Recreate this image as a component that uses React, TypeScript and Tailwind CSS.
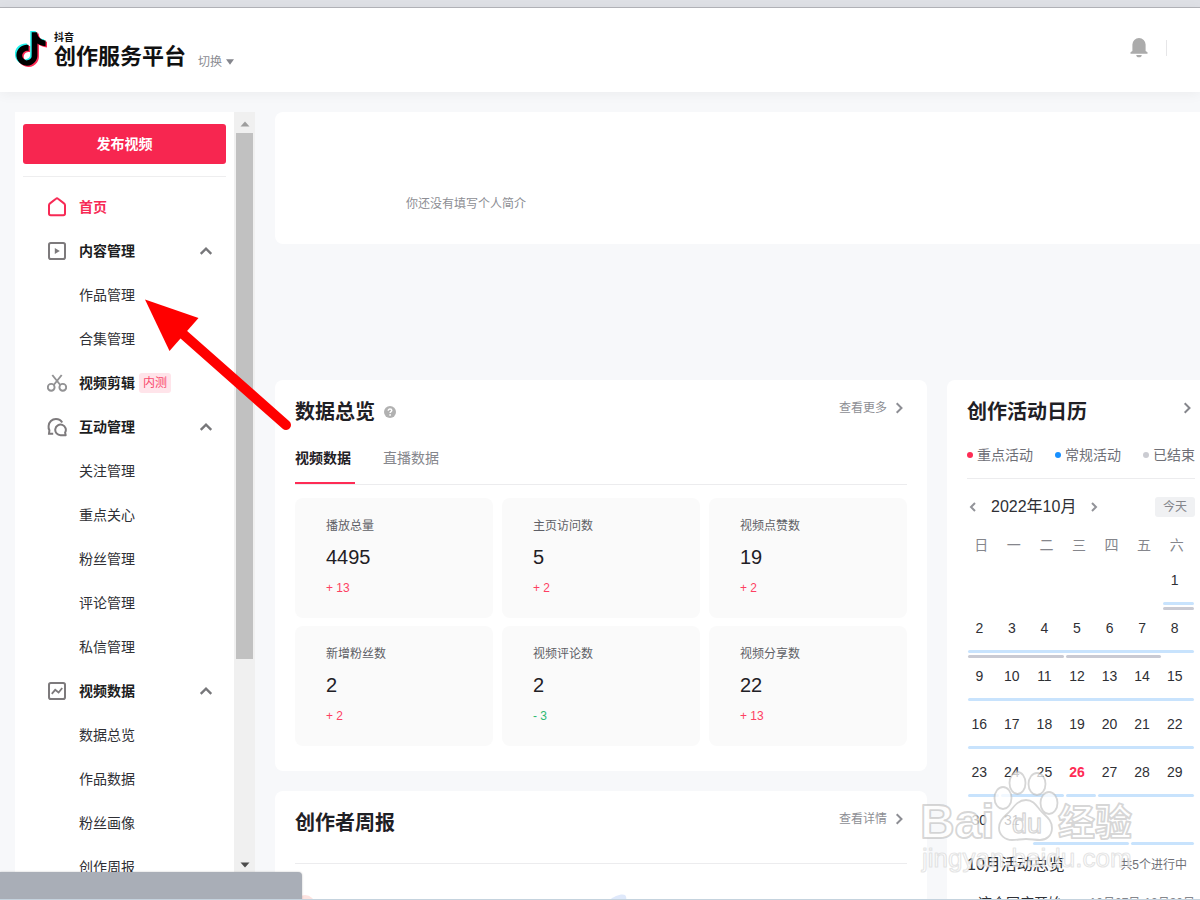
import type { ReactNode } from "react";

type Section = {
  icon: ReactNode;
  label: string;
  badge?: string;
  children?: string[];
};

const HomeIcon = () => (
  <svg className="size-5" viewBox="0 0 20 20" fill="none" stroke="#f72a55" strokeWidth="2" strokeLinejoin="round">
    <path d="M2 8.300c0-.8.3-1.400 1-1.900L9 1.700c.6-.5 1.400-.5 2 0l6 4.700c.7.500 1 1.100 1 1.900v8.200c0 1.100-.6 1.700-1.700 1.700H3.700C2.600 18.200 2 17.600 2 16.500z" />
  </svg>
);

const ContentIcon = () => (
  <svg className="size-5" viewBox="0 0 20 20" fill="none" stroke="#7d7a7c" strokeWidth="2">
    <rect x="2" y="2" width="16" height="16" rx="1.800" />
    <path d="M7.800 7v6l5-3z" fill="#7d7a7c" stroke="none" />
  </svg>
);

const ScissorsIcon = () => (
  <svg className="size-5" viewBox="0 0 20 20" fill="none" stroke="#929294" strokeWidth="1.900">
    <circle cx="4.200" cy="14.300" r="3.400" />
    <circle cx="15.800" cy="14.300" r="3.400" />
    <path d="M5.300 2l8 10M14.700 2L6.700 12" />
  </svg>
);

const ChatIcon = () => (
  <svg className="size-5" viewBox="0 0 20 20" fill="none" stroke="#7d7a7c" strokeWidth="2">
    <path d="M6.200 16.800H2l.4-3.500A7.400 7.400 0 0 1 1.600 9 7.300 7.300 0 0 1 9 2c2.700 0 5 1.300 6.200 3.400" />
    <path d="M18.700 18.200h-5a5.300 5.300 0 1 1 4.400-2.600z" strokeLinejoin="round" />
  </svg>
);

const DataIcon = () => (
  <svg className="size-5" viewBox="0 0 20 20" fill="none" stroke="#7d7a7c" strokeWidth="2">
    <rect x="2" y="2" width="16" height="16" rx="1.800" />
    <path d="M4.800 12.800l3.400-4 3.400 2.700 3.600-4.500" strokeWidth="1.800" />
  </svg>
);

const Chevron = ({ dir, className }: { dir: "up" | "left" | "right"; className: string }) => {
  const d = { up: "M1.500 8.500L6 4l4.500 4.500", left: "M8 2L4 6l4 4", right: "M3.700 1.200L8.500 6 3.700 10.800" }[dir];
  return (
    <svg className={className} viewBox="0 0 12 12" fill="none" stroke="currentColor" strokeWidth="2">
      <path d={d} />
    </svg>
  );
};

const NOTE =
  "M12.525.02c1.31-.02 2.61-.01 3.91-.02.08 1.53.63 3.09 1.75 4.17 1.12 1.11 2.7 1.62 4.24 1.79v4.03c-1.44-.05-2.89-.35-4.2-.97-.57-.26-1.1-.59-1.62-.93-.01 2.92.01 5.84-.02 8.75-.08 1.4-.54 2.79-1.35 3.94-1.31 1.92-3.58 3.17-5.91 3.21-1.43.08-2.86-.31-4.08-1.03-2.02-1.19-3.44-3.37-3.65-5.71-.02-.5-.03-1-.01-1.49.18-1.9 1.12-3.72 2.58-4.96 1.66-1.44 3.98-2.13 6.15-1.72.02 1.48-.04 2.96-.04 4.44-.99-.32-2.15-.23-3.02.37-.63.41-1.11 1.04-1.36 1.75-.21.51-.15 1.07-.14 1.61.24 1.64 1.82 3.02 3.5 2.87 1.12-.01 2.19-.66 2.77-1.61.19-.33.4-.67.41-1.06.1-1.79.06-3.57.07-5.36.01-4.03-.01-8.05.02-12.07z";

const Logo = () => (
  <svg className="mt-px h-9 w-8" viewBox="0 0 32 36" aria-label="抖音">
    <path d={NOTE} fill="#25f4ee" transform="translate(-2.300 0) scale(1.400)" />
    <path d={NOTE} fill="#fe2c55" transform="translate(.7 2.400) scale(1.400)" />
    <path d={NOTE} fill="#000" transform="translate(-.8 1.200) scale(1.400)" />
  </svg>
);

const sections: Section[] = [
  { icon: <ContentIcon />, label: "内容管理", children: ["作品管理", "合集管理"] },
  { icon: <ScissorsIcon />, label: "视频剪辑", badge: "内测" },
  {
    icon: <ChatIcon />,
    label: "互动管理",
    children: ["关注管理", "重点关心", "粉丝管理", "评论管理", "私信管理"],
  },
  { icon: <DataIcon />, label: "视频数据", children: ["数据总览", "作品数据", "粉丝画像", "创作周报"] },
];

const stats = [
  { label: "播放总量", value: "4495", delta: "+ 13" },
  { label: "主页访问数", value: "5", delta: "+ 2" },
  { label: "视频点赞数", value: "19", delta: "+ 2" },
  { label: "新增粉丝数", value: "2", delta: "+ 2" },
  { label: "视频评论数", value: "2", delta: "- 3" },
  { label: "视频分享数", value: "22", delta: "+ 13" },
];

const BLUE = "bg-[#c8e3fd]";
const GRAY = "bg-[#c9cad3]";

type Bar = { cols: string; color: string };
const weeks: { days: (number | null)[]; bars: Bar[] }[] = [
  {
    days: [null, null, null, null, null, null, 1],
    bars: [
      { cols: "col-start-7 col-end-8", color: BLUE },
      { cols: "col-start-7 col-end-8", color: GRAY },
    ],
  },
  {
    days: [2, 3, 4, 5, 6, 7, 8],
    bars: [
      { cols: "col-start-1 col-end-8", color: BLUE },
      { cols: "col-start-1 col-end-4", color: GRAY },
      { cols: "col-start-4 col-end-7", color: GRAY },
    ],
  },
  { days: [9, 10, 11, 12, 13, 14, 15], bars: [{ cols: "col-start-1 col-end-8", color: BLUE }] },
  { days: [16, 17, 18, 19, 20, 21, 22], bars: [{ cols: "col-start-1 col-end-8", color: BLUE }] },
  {
    days: [23, 24, 25, 26, 27, 28, 29],
    bars: [
      { cols: "col-start-1 col-end-2", color: BLUE },
      { cols: "col-start-2 col-end-4", color: BLUE },
      { cols: "col-start-4 col-end-5", color: BLUE },
      { cols: "col-start-5 col-end-8", color: BLUE },
    ],
  },
  {
    days: [30, 31, null, null, null, null, null],
    bars: [
      { cols: "col-start-3 col-end-6", color: BLUE },
      { cols: "col-start-6 col-end-8", color: BLUE },
    ],
  },
];

function Header() {
  return (
    <header className="flex h-[84px] shrink-0 items-start bg-white pt-[22px] pl-[15px] shadow-[0_2px_12px_rgba(0,0,0,0.05)]">
      <Logo />
      <div className="mt-px ml-[7px] flex flex-col text-[#111] font-bold">
        <span className="text-[10px] leading-[14px]">抖音</span>
        <span className="text-[22px] leading-6">创作服务平台</span>
      </div>
      <button className="mt-[22px] ml-3 flex items-center gap-1 text-xs leading-5 text-[#8b8c92]">
        切换
        <svg className="h-[6px] w-2" viewBox="0 0 8 6" fill="#85868d">
          <path d="M0 .3h8L4 5.700z" />
        </svg>
      </button>
      <div className="mt-2 mr-[33px] ml-auto flex items-center gap-[18px]">
        <button aria-label="通知">
          <svg className="h-5 w-[18px]" viewBox="0 0 18 20" fill="#ababab">
            <path d="M9 0a6.600 6.600 0 0 0-6.600 6.600V13L.5 14.300v1.500h17v-1.500L15.600 13V6.600A6.600 6.600 0 0 0 9 0zM6.300 17a2.700 2.300 0 0 0 5.400 0z" />
          </svg>
        </button>
        <span className="h-4 w-px bg-[#e6e6e8]" />
      </div>
    </header>
  );
}

function Sidebar() {
  return (
    <div className="mb-7 ml-[15px] flex w-60 shrink-0 overflow-hidden">
      <nav className="flex-1 bg-white text-sm text-[#2f3035]">
        <div className="mx-2 border-b border-[#eeeeef] pt-3 pb-3">
          <button className="h-10 w-full rounded-[3px] bg-[#f72650] font-bold text-white">发布视频</button>
        </div>
        <div className="pt-2">
          <a href="#home" className="flex h-11 items-center pl-8 font-bold text-[#f72a55]">
            <HomeIcon />
            <span className="ml-3">首页</span>
          </a>
          {sections.map((s) => (
            <div key={s.label}>
              <button className="flex h-11 w-full items-center pr-[21px] pl-8 font-bold text-[#1c1d21]">
                {s.icon}
                <span className="ml-3">{s.label}</span>
                {s.badge && (
                  <span className="ml-1 rounded-[3px] bg-[#ffe4ea] px-1 text-xs leading-5 font-normal text-[#f94a6d]">
                    {s.badge}
                  </span>
                )}
                {s.children && <Chevron dir="up" className="ml-auto size-[14px] text-[#77777a]" />}
              </button>
              {s.children?.map((c) => (
                <a key={c} href={"#" + c} className="flex h-11 items-center pl-16">
                  {c}
                </a>
              ))}
            </div>
          ))}
        </div>
      </nav>
      <div className="flex w-[21px] flex-col items-center bg-[#f0f0f0]">
        <svg className="mt-[9px] h-[6px] w-[10px] shrink-0" viewBox="0 0 10 6" fill="#9d9d9d">
          <path d="M.5 5.500h9L5 .5z" />
        </svg>
        <div className="mt-[6px] h-[526px] w-[17px] shrink-0 bg-[#c1c1c1]" />
        <svg className="mt-auto mb-1 h-[6px] w-[10px] shrink-0" viewBox="0 0 10 6" fill="#4c4c4c">
          <path d="M.5.5h9L5 5.500z" />
        </svg>
      </div>
    </div>
  );
}

const CardLink = ({ label }: { label: string }) => (
  <a href="#more" className="mr-[2px] flex items-center gap-[6px] text-xs leading-4 text-[#8d8e94]">
    {label}
    <Chevron dir="right" className="size-3" />
  </a>
);

function Overview() {
  return (
    <section className="rounded-lg bg-white px-5 pt-[18px] pb-[25px]">
      <div className="flex items-start justify-between">
        <h2 className="flex items-center gap-[9px] text-xl leading-7 font-bold text-[#1f2025]">
          数据总览
          <svg className="size-3" viewBox="0 0 12 12">
            <circle cx="6" cy="6" r="6" fill="#b1b1b1" />
            <path d="M4.200 4.700c0-1 .8-1.700 1.800-1.700s1.800.6 1.800 1.500c0 1.100-1.700 1.200-1.700 2.500" fill="none" stroke="#fff" strokeWidth="1.400" />
            <circle cx="6.100" cy="8.900" r=".9" fill="#fff" />
          </svg>
        </h2>
        <div className="mt-[2px]">
          <CardLink label="查看更多" />
        </div>
      </div>
      <div className="mt-5 flex h-[39px] gap-7 border-b border-[#ececee] text-sm leading-6" role="tablist">
        <button role="tab" aria-selected="true" className="flex h-[38px] w-[60px] border-b-2 border-[#fe2c55] font-bold text-[#1f2025]">
          视频数据
        </button>
        <button role="tab" aria-selected="false" className="flex text-[#85868c]">
          直播数据
        </button>
      </div>
      <div className="mt-[13px] grid grid-cols-3 gap-x-[9px] gap-y-2">
        {stats.map((s) => (
          <div key={s.label} className="h-[120px] rounded-lg bg-[#fafafa] pt-[18px] pl-[31px]">
            <div className="text-xs leading-5 text-[#5e5f66]">{s.label}</div>
            <div className="mt-2 text-xl leading-[26px] text-[#1f2025]">{s.value}</div>
            <div className={s.delta[0] === "-" ? "mt-[6px] text-xs leading-6 text-[#2eb872]" : "mt-[6px] text-xs leading-6 text-[#fe3f63]"}>
              {s.delta}
            </div>
          </div>
        ))}
      </div>
    </section>
  );
}

function WeeklyReport() {
  return (
    <section className="flex-1 rounded-t-lg bg-white px-5 pt-[18px]">
      <div className="flex items-start justify-between border-b border-[#ececee] pb-[26px]">
        <h2 className="text-xl leading-7 font-bold text-[#1f2025]">创作者周报</h2>
        <div className="mt-[2px]">
          <CardLink label="查看详情" />
        </div>
      </div>
      <svg className="mt-[30px] h-10 w-[340px]" viewBox="0 0 340 40">
        <circle cx="10" cy="11" r="10" fill="#fde3e0" />
        <path d="M312 8c5-5 14-9 18-7 2 2 2 6-2 12z" fill="#dfe9fb" />
      </svg>
    </section>
  );
}

const Dot = ({ color, label }: { color: string; label: string }) => (
  <span className="flex items-center gap-1">
    <i className={color + " size-[6px] rounded-full"} />
    {label}
  </span>
);

function Calendar() {
  return (
    <section className="w-[268px] shrink-0 rounded-t-lg bg-white px-5 pt-[18px]">
      <div className="flex items-start justify-between text-[#85868c]">
        <h2 className="text-xl leading-7 font-bold text-[#1f2025]">创作活动日历</h2>
        <a href="#calendar" aria-label="创作活动日历" className="mt-1 mr-[2px]">
          <Chevron dir="right" className="size-3" />
        </a>
      </div>
      <div className="mt-[17px] flex h-9 items-start justify-between border-b border-[#ececee] text-sm leading-6 text-[#6f7077]">
        <Dot color="bg-[#fe2c55]" label="重点活动" />
        <Dot color="bg-[#1890ff]" label="常规活动" />
        <Dot color="bg-[#cbccd2]" label="已结束" />
      </div>
      <div className="mt-4 flex items-center text-base leading-6 text-[#2f3035]">
        <button aria-label="上个月">
          <Chevron dir="left" className="size-3 text-[#929399]" />
        </button>
        <span className="mx-3">2022年10月</span>
        <button aria-label="下个月">
          <Chevron dir="left" className="size-3 rotate-180 text-[#929399]" />
        </button>
        <button className="ml-auto w-10 rounded-[3px] bg-[#f0f1f3] text-center text-xs leading-5 text-[#85868c]">今天</button>
      </div>
      <table className="mt-[14px] w-full table-fixed border-collapse text-sm text-[#2f3035]">
        <thead>
          <tr className="h-6 leading-6 text-[#85868c]">
            {["日", "一", "二", "三", "四", "五", "六"].map((d) => (
              <th key={d} className="p-0 pr-1 font-normal">
                {d}
              </th>
            ))}
          </tr>
        </thead>
        {weeks.map((w, i) => (
          <tbody key={i}>
            <tr>
              {w.days.map((d, j) => (
                <td
                  key={j}
                  className={
                    d === 26
                      ? "h-[45px] p-0 pr-2 text-center align-bottom leading-11 font-bold text-[#fe2c55]"
                      : "h-[45px] p-0 pr-2 text-center align-bottom leading-11"
                  }
                >
                  {d}
                </td>
              ))}
            </tr>
            <tr>
              <td colSpan={7} className="h-[3px] p-0">
                <div className="mx-px -mb-[5px] grid h-2 grid-cols-7 content-start gap-[2px]">
                  {w.bars.map((b, k) => (
                    <i key={k} className={b.cols + " " + b.color + " h-[3px] rounded-sm"} />
                  ))}
                </div>
              </td>
            </tr>
          </tbody>
        ))}
      </table>
      <div className="mt-2 flex items-center justify-between pr-2 text-base leading-6 text-[#2f3035]">
        10月活动总览
        <span className="text-xs text-[#6f7077]">共5个进行中</span>
      </div>
      <div className="mt-[14px] flex items-center justify-between pl-[11px] text-sm leading-6 whitespace-nowrap text-[#2f3035]">
        这个国庆开始
        <span className="text-xs text-[#85868c]">10月07日-10月30日</span>
      </div>
    </section>
  );
}

const Arrow = () => (
  <svg className="pointer-events-none absolute top-[295px] left-[140px] h-[140px] w-[156px]" viewBox="140 295 156 140">
    <path d="M183 334L286 425" stroke="#f00" strokeWidth="10" strokeLinecap="round" />
    <path d="M145 299.500L198.500 318 169.500 351z" fill="#f00" />
  </svg>
);

const Watermark = () => (
  <svg
    className="pointer-events-none absolute right-[60px] bottom-5 h-[120px] w-[225px]"
    viewBox="915 760 225 120"
    fill="#fff"
    fillOpacity=".75"
    stroke="#b4b4b4"
    strokeOpacity=".55"
    strokeWidth="1.800"
    strokeLinejoin="round"
    fontFamily="Liberation Sans, Noto Sans CJK SC, sans-serif"
  >
    <text x="920" y="838" fontSize="48" fontWeight="700">Bai</text>
    <g>
      <ellipse cx="1003" cy="798" rx="8.500" ry="11" />
      <ellipse cx="1017.500" cy="783" rx="8" ry="11" />
      <ellipse cx="1037" cy="784" rx="8.500" ry="11" />
      <ellipse cx="1049" cy="803" rx="8.500" ry="11" />
      <path d="M1026 800c7 0 10 5 14 10 5 6 12 9 12 18 0 8-6 12-12 12-5 0-9-1-14-1s-9 1-14 1c-7 0-13-5-13-12 0-9 7-12 12-18 4-5 8-10 15-10z" />
    </g>
    <text x="1012" y="833" fontSize="27" strokeWidth="1.400">du</text>
    <text x="1058" y="836" fontSize="37" fontWeight="700">经验</text>
    <text x="922" y="867" fontSize="26" strokeWidth="1.200" strokeOpacity=".35" fillOpacity=".7">jingyan.baidu.com</text>
  </svg>
);

export default function App() {
  return (
    <div className="relative flex h-screen flex-col overflow-hidden bg-[#f7f8fa] font-['Liberation_Sans','Noto_Sans_CJK_SC',sans-serif]">
      <div className="h-2 shrink-0 border-b border-[#b3b4b9] bg-[#dee0e5]" />
      <Header />
      <div className="flex min-h-0 flex-1 gap-5 pt-5">
        <Sidebar />
        <main className="flex min-w-0 flex-1 flex-col">
          <section className="flex h-[132px] shrink-0 items-end rounded-l-lg bg-white pb-[30px] pl-[131px] text-xs leading-5 text-[#8d8e94]">
            你还没有填写个人简介
          </section>
          <div className="mt-[136px] -mr-[15px] flex min-h-0 flex-1 gap-5">
            <div className="flex min-w-0 flex-1 flex-col gap-5">
              <Overview />
              <WeeklyReport />
            </div>
            <Calendar />
          </div>
        </main>
      </div>
      <Arrow />
      <Watermark />
      <div className="absolute bottom-0 left-0 h-7 w-[302px] rounded-tr-[4px] bg-[#a9aeb7] shadow-[0_0_2px_rgba(0,0,0,0.25)]" />
      <div className="absolute inset-x-0 bottom-0 h-px bg-[#c5d3de]" />
    </div>
  );
}
